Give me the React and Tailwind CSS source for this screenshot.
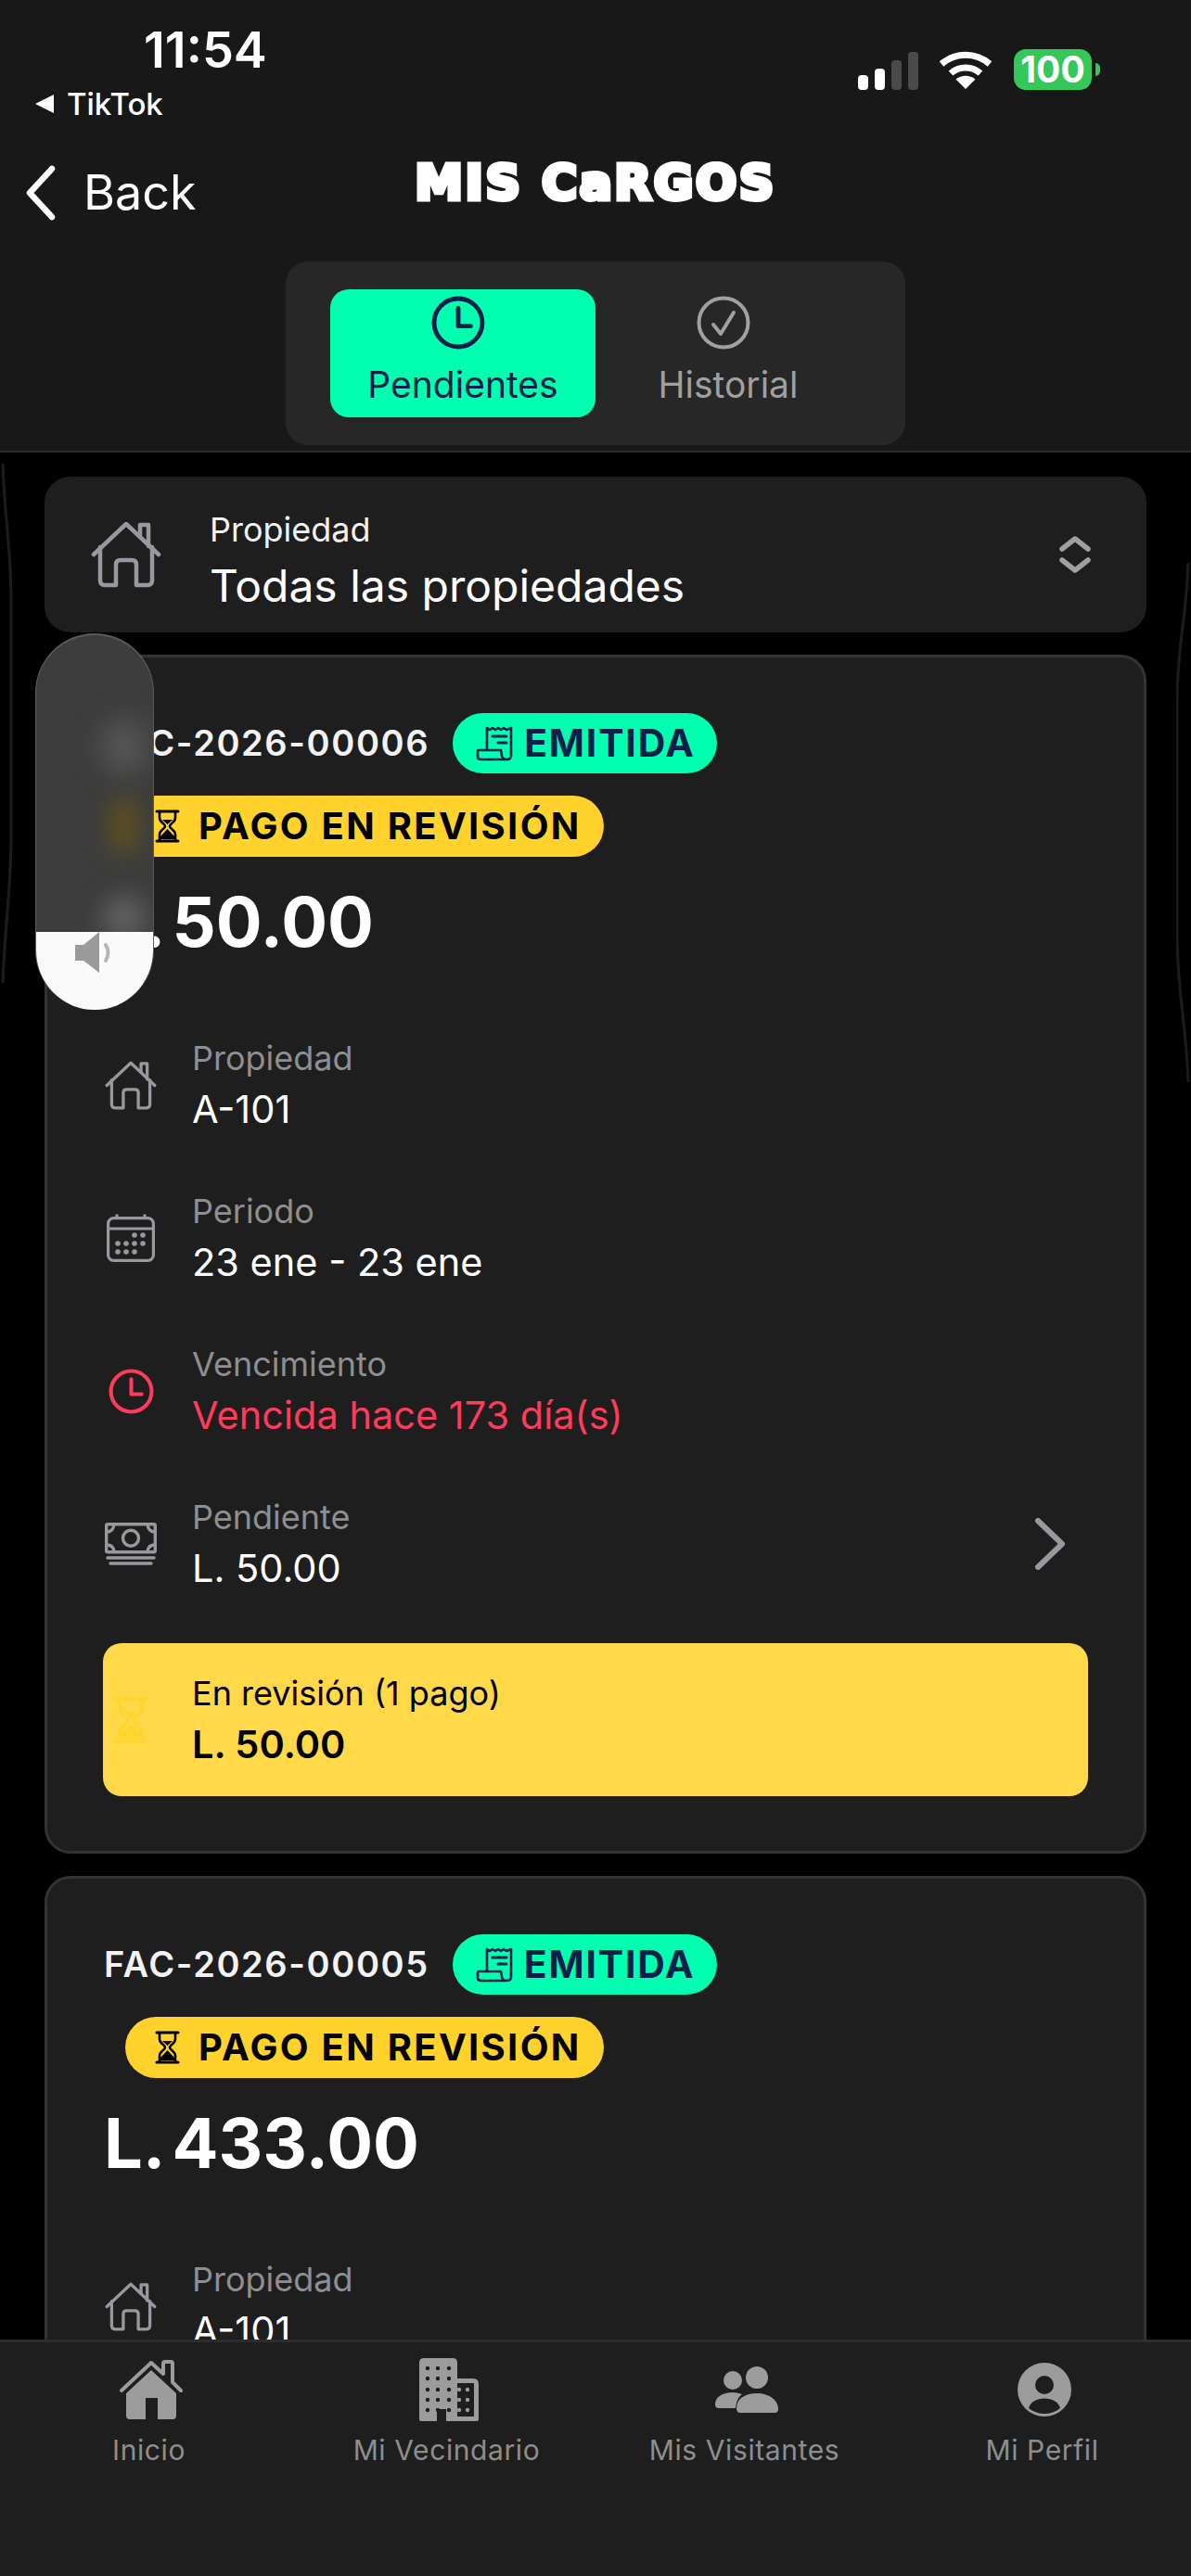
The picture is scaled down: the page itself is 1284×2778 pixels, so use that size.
import React from 'react'

const HouseLine = ({ className }) => (
  <svg viewBox="0 0 76 72" fill="none" stroke="currentColor" strokeWidth="4.5" strokeLinecap="round" strokeLinejoin="round" className={className}>
    <path d="M3 36 L38 3 L73 36" />
    <path d="M53 17 V4 H62 V27" />
    <path d="M10 28 V64 Q10 69 15 69 H27 V47 Q27 42 32 42 H44 Q49 42 49 47 V69 H61 Q66 69 66 64 V28" />
  </svg>
)

const Calendar = ({ className }) => (
  <svg viewBox="0 0 52 52" fill="none" stroke="currentColor" strokeWidth="3.2" className={className}>
    <rect x="1.6" y="4.6" width="48.8" height="45.8" rx="6" />
    <path d="M1.6 16 H50.4" />
    <path d="M11 0.5 V5 M41 0.5 V5" />
    <g fill="currentColor" stroke="none">
      <circle cx="30" cy="23" r="2.8" /><circle cx="39" cy="23" r="2.8" />
      <circle cx="12" cy="32" r="2.8" /><circle cx="21" cy="32" r="2.8" /><circle cx="30" cy="32" r="2.8" /><circle cx="39" cy="32" r="2.8" />
      <circle cx="12" cy="41" r="2.8" /><circle cx="21" cy="41" r="2.8" /><circle cx="30" cy="41" r="2.8" />
    </g>
  </svg>
)

const Clock = ({ className, width = 4 }) => (
  <svg viewBox="0 0 48 48" fill="none" stroke="currentColor" strokeWidth={width} strokeLinecap="round" strokeLinejoin="round" className={className}>
    <circle cx="24" cy="24" r="21.5" />
    <path d="M24 11 V27 H35" />
  </svg>
)

const Check = ({ className }) => (
  <svg viewBox="0 0 58 58" fill="none" stroke="currentColor" strokeWidth="4" strokeLinecap="round" strokeLinejoin="round" className={className}>
    <circle cx="29" cy="29" r="26.5" />
    <path d="M18 31 L26 41 L40 18" />
  </svg>
)

const Cash = ({ className }) => (
  <svg viewBox="0 0 56 46" fill="none" stroke="currentColor" strokeWidth="3.4" strokeLinecap="round" className={className}>
    <rect x="1.7" y="1.7" width="52.6" height="30" rx="1.5" />
    <circle cx="28" cy="16.7" r="8.5" />
    <path d="M2 10 Q9 10 10 2 M54 10 Q47 10 46 2 M2 24 Q9 24 10 31 M54 24 Q47 24 46 31" />
    <path d="M3 38 H53 M6 44 H50" />
  </svg>
)

const Receipt = ({ className }) => (
  <svg viewBox="0 0 40 38" fill="none" stroke="currentColor" strokeWidth="2.6" strokeLinecap="round" strokeLinejoin="round" className={className}>
    <path d="M12 25 V2 L15 4 L18 2 L21 4 L24 2 L27 4 L30 2 L33 4 L38 2 V32 Q38 36 33 36 Q29 36 28 32 L27 26 H3 Q2 26 2 28 V33 Q2 36 6 36 H33" />
    <path d="M18 11 H33 M24 18 H33" strokeWidth="3" />
  </svg>
)

const Hourglass = ({ className }) => (
  <svg viewBox="0 0 27 36" fill="none" stroke="currentColor" strokeWidth="2.6" strokeLinecap="round" strokeLinejoin="round" className={className}>
    <path d="M2 2 H25 M2 34 H25" strokeWidth="3" />
    <path d="M5 3 V9 C5 14 11 15 11 18 C11 21 5 22 5 27 V33 M22 3 V9 C22 14 16 15 16 18 C16 21 22 22 22 27 V33" />
    <path d="M13.5 21 L21 29 V32 H6 V29 Z M8 11 H19 L13.5 16 Z" fill="currentColor" stroke="none" />
  </svg>
)

const HouseFill = ({ className }) => (
  <svg viewBox="0 0 68 64" fill="currentColor" className={className}>
    <path d="M2 33 L34 3 L47 15 V4 Q47 2 49 2 H55 Q57 2 57 4 V24 L66 33" fill="none" stroke="currentColor" strokeWidth="4" strokeLinecap="round" strokeLinejoin="round" />
    <path d="M34 11 L61 36 V60 Q61 64 57 64 H41 V41 H28 V64 H11 Q7 64 7 60 V36 Z" />
  </svg>
)

const Building = ({ className }) => {
  const xs = [9, 20, 32]
  const ys = [11, 22, 34, 45, 56]
  return (
    <svg viewBox="0 0 64 68" className={className}>
      <path fill="currentColor" d="M5 0 H36 Q41 0 41 5 V22 H58 Q64 22 64 28 V66 Q64 68 62 68 H29 V55 H19 V68 H2 Q0 68 0 66 V5 Q0 0 5 0 Z" />
      <rect x="41" y="27" width="18" height="36" fill="#1e1e1e" />
      {ys.map((y) => xs.map((x) => <circle key={`${x}-${y}`} cx={x} cy={y} r="2.2" fill="#1e1e1e" />))}
      {[34, 45, 56].map((y) => [43, 52].map((x) => <circle key={`${x}-${y}`} cx={x} cy={y} r="2.2" fill="currentColor" />))}
    </svg>
  )
}

const People = ({ className }) => (
  <svg viewBox="0 0 68 50" fill="currentColor" className={className}>
    <circle cx="19" cy="15" r="10" />
    <circle cx="45" cy="12" r="12" />
    <path d="M0 41 C0 33 8 28 19 28 C23 28 26 29 29 30 C25 33 23 37 22 45 H4 Q0 45 0 41 Z" />
    <path d="M23 45 C23 35 32 29 45 29 C59 29 68 37 68 46 Q68 50 64 50 H27 Q23 50 23 45 Z" />
  </svg>
)

const Profile = ({ className }) => (
  <svg viewBox="0 0 58 58" className={className}>
    <circle cx="29" cy="29" r="29" fill="currentColor" />
    <circle cx="29" cy="24" r="10" fill="#1e1e1e" />
    <path d="M12 49 C14 42 21 38.500 29 38.500 C37 38.500 44 42 46 49 C41 53 35 55 29 55 C23 55 17 53 12 49 Z" fill="#1e1e1e" />
  </svg>
)

const Row = ({ icon, label, value, valueClass = 'text-white', right }) => (
  <div className="flex items-center">
    <div className="w-[60px] flex justify-center text-[#98989f] shrink-0">{icon}</div>
    <div className="ml-[36px] flex-1">
      <div className="text-[36px] leading-[44px] text-[#8e8e93]">{label}</div>
      <div className={`mt-[8px] text-[41.5px] leading-[50px] font-normal ${valueClass}`}>{value}</div>
    </div>
    {right}
  </div>
)

const Card = ({ code, amount, pending }) => (
  <div className="border-[3px] border-[#333333] rounded-[28px] bg-[#1e1e1e] px-[60px] pt-[60px] pb-[59px] shrink-0">
    <div className="flex items-center h-[65px]">
      <span className="ml-[1px] text-[38px] font-semibold tracking-[1.6px] text-[#f2f2f2]">{code}</span>
      <span className="ml-[25px] h-[65px] w-[285px] rounded-full bg-[#00ffae] text-[#0f1f4b] flex items-center pl-[25px]">
        <Receipt className="w-[40px] h-[38px]" />
        <span className="ml-[12px] text-[41px] font-bold tracking-[1.8px]">EMITIDA</span>
      </span>
    </div>
    <div className="mt-[24px] ml-[24px] w-[516px] h-[66px] rounded-full bg-[#ffd22e] text-black flex items-center pl-[32px]">
      <Hourglass className="w-[27px] h-[36px]" />
      <span className="ml-[20px] text-[40px] font-bold tracking-[2.3px]">PAGO EN REVISIÓN</span>
    </div>
    <div className="mt-[25px] ml-[1px] text-[74px] leading-[90px] font-bold text-white flex">
      <span>L.</span><span className="ml-[7px]">{amount}</span>
    </div>
    <div className="mt-[80px] flex flex-col gap-[63px]">
      <Row icon={<HouseLine className="w-[56px] h-[53px]" />} label="Propiedad" value="A-101" />
      <Row icon={<Calendar className="w-[52px] h-[52px]" />} label="Periodo" value="23 ene - 23 ene" />
      <Row icon={<Clock className="w-[49px] h-[49px] text-[#ff3b5c]" />} label="Vencimiento" value="Vencida hace 173 día(s)" valueClass="text-[#ff3b5c]" />
      <Row
        icon={<Cash className="w-[56px] h-[46px]" />}
        label="Pendiente"
        value={`L. ${amount}`}
        right={
          <svg viewBox="0 0 34 56" fill="none" stroke="#98989f" strokeWidth="6" strokeLinecap="round" strokeLinejoin="round" className="w-[34px] h-[56px] mr-[24px]">
            <path d="M4 3 L30 28 L4 53" />
          </svg>
        }
      />
    </div>
    <div className="mt-[56px] h-[165px] rounded-[20px] bg-[#ffd949] flex items-center">
      <div className="w-[60px] flex justify-center shrink-0 text-[#ffd52e]">
        <Hourglass className="w-[38px] h-[52px]" />
      </div>
      <div className="ml-[36px]">
        <div className="text-[36px] leading-[44px] text-black">En revisión (1 pago)</div>
        <div className="mt-[8px] text-[41.5px] leading-[50px] font-semibold text-black">L. {pending}</div>
      </div>
    </div>
  </div>
)

export default function App() {
  return (
    <div className="relative w-full h-[2778px] overflow-hidden flex flex-col bg-black font-['Inter',sans-serif]">
      {/* header */}
      <header className="h-[488px] shrink-0 bg-[#181818] border-b-[2px] border-[#2a2a2a]">
        <div className="h-[150px] flex justify-between">
          <div className="pl-[38px] pt-[23px]">
            <div className="ml-[117px] text-[54px] leading-[62px] font-semibold text-white">11:54</div>
            <div className="mt-[7px] flex items-center text-[33px] leading-[40px] font-medium text-white">
              <svg viewBox="0 0 20 20" className="w-[20px] h-[20px]" fill="white"><path d="M0 10 L20 0 V20 Z" /></svg>
              <span className="ml-[14px]">TikTok</span>
            </div>
          </div>
          <div className="pr-[98px] pt-[53px] flex items-start">
            <div className="flex items-end gap-[7px] h-[44px]">
              <div className="w-[11px] h-[16px] rounded-[4px] bg-white" />
              <div className="w-[11px] h-[23px] rounded-[4px] bg-white" />
              <div className="w-[11px] h-[32px] rounded-[4px] bg-[#4a4a4a]" />
              <div className="w-[11px] h-[41px] rounded-[4px] bg-[#4a4a4a]" />
            </div>
            <svg viewBox="0 0 58 42" className="ml-[22px] w-[58px] h-[42px] mt-[2px]" fill="none" stroke="white" strokeWidth="7">
              <path d="M3 14 C18 1 40 1 55 14" />
              <path d="M13 24 C22 16 36 16 45 24" />
              <path d="M18.500 30.500 L29 41 L39.500 30.500 C33 25.500 25 25.500 18.500 30.500 Z" fill="white" stroke="none" />
            </svg>
            <div className="ml-[23px] w-[84px] h-[44px] rounded-[13px] bg-[#34c759] flex items-center justify-center text-[39px] font-bold text-white">100</div>
            <div className="ml-[4px] mt-[15px] w-[5px] h-[14px] rounded-r-full bg-[#34c759]" />
          </div>
        </div>
        <div className="h-[132px] grid grid-cols-[1fr_auto_1fr] items-center">
          <div className="flex items-center pl-[28px] pb-[16px]">
            <svg viewBox="0 0 32 60" fill="none" stroke="white" strokeWidth="6.500" strokeLinecap="round" strokeLinejoin="round" className="w-[32px] h-[60px]">
              <path d="M28 4 L4 30 L28 56" />
            </svg>
            <span className="ml-[30px] text-[52px] text-white">Back</span>
          </div>
          <div className="pb-[38px] font-['DejaVu_Sans',sans-serif] font-bold text-[52px] leading-[50px] tracking-[2.5px] text-white [-webkit-text-stroke:5px_white]">MIS CaRGOS</div>
          <div />
        </div>
        <div className="mx-auto w-[668px] h-[198px] rounded-[24px] bg-[#272727] pl-[48px] pt-[30px] flex">
          <div className="w-[286px] h-[138px] rounded-[20px] bg-[#00ffae] text-[#0f1f4b] flex flex-col items-center pt-[7px]">
            <Clock className="w-[58px] h-[58px] mr-[11px]" />
            <span className="mt-[14px] text-[39px] leading-[48px]">Pendientes</span>
          </div>
          <div className="w-[286px] h-[138px] text-[#a0a0a0] flex flex-col items-center pt-[7px]">
            <Check className="w-[58px] h-[58px] mr-[11px]" />
            <span className="mt-[14px] text-[39px] leading-[48px]">Historial</span>
          </div>
        </div>
      </header>

      {/* contenido */}
      <main className="flex-1 min-h-0 overflow-hidden px-[48px] pt-[26px] flex flex-col gap-[24px]">
        <div className="h-[168px] shrink-0 rounded-[28px] bg-[#1e1e1e] flex items-center pl-[50px] pr-[60px]">
          <HouseLine className="w-[76px] h-[72px] text-[#98989f]" />
          <div className="ml-[52px] flex-1 pt-[14px]">
            <div className="text-[36px] leading-[44px] text-[#f2f2f2]">Propiedad</div>
            <div className="mt-[10px] text-[48px] leading-[58px] text-white">Todas las propiedades</div>
          </div>
          <svg viewBox="0 0 34 40" fill="none" stroke="#a0a0a0" strokeWidth="5.500" strokeLinecap="round" strokeLinejoin="round" className="w-[34px] h-[40px]">
            <path d="M3 14 L17 3 L31 14" />
            <path d="M3 26 L17 37 L31 26" />
          </svg>
        </div>
        <Card code="FAC-2026-00006" amount="50.00" pending="50.00" />
        <Card code="FAC-2026-00005" amount="433.00" pending="433.00" />
      </main>

      {/* nav inferior */}
      <nav className="h-[255px] shrink-0 bg-[#1e1e1e] border-t-[3px] border-[#2e2e2e] grid grid-cols-4 pt-[15px] items-start text-[#8e8e8e]">
        {[
          { label: 'Inicio', icon: <HouseFill className="w-[68px] h-[64px]" /> },
          { label: 'Mi Vecindario', icon: <Building className="w-[64px] h-[68px]" /> },
          { label: 'Mis Visitantes', icon: <People className="w-[68px] h-[50px]" /> },
          { label: 'Mi Perfil', icon: <Profile className="w-[58px] h-[58px]" /> },
        ].map((item) => (
          <div key={item.label} className="flex flex-col items-center">
            <div className="h-[72px] flex items-center justify-center pl-[4px] text-[#9c9c9c]">{item.icon}</div>
            <span className="mt-[11px] text-[30px] leading-[36px] tracking-[0.6px]">{item.label}</span>
          </div>
        ))}
      </nav>

      {/* lineas tenues del fondo */}
      <svg viewBox="0 0 16 560" fill="none" stroke="#1c1c1c" strokeWidth="3" className="absolute right-0 top-[607px] w-[16px] h-[560px]">
        <path d="M13 0 C11 60 1 90 1 150 V400 C1 460 11 500 13 560" />
      </svg>
      <svg viewBox="0 0 16 560" fill="none" stroke="#1c1c1c" strokeWidth="3" className="absolute left-0 top-[500px] w-[16px] h-[560px]">
        <path d="M3 0 C5 60 12 90 12 150 V400 C12 460 5 500 3 560" />
      </svg>

      {/* volumen del sistema, encima de todo */}
      <div className="absolute left-[38px] top-[683px] w-[128px] h-[406px] rounded-[64px] overflow-hidden bg-[#3d3d3d] border-t-[2px] border-x-[1px] border-[#5a5a5a] flex flex-col justify-end">
        <div className="absolute left-[70px] top-[90px] w-[50px] h-[60px] rounded-full bg-[#555555] blur-[14px]" />
        <div className="absolute left-[80px] top-[175px] w-[30px] h-[60px] rounded-full bg-[#5e5020] blur-[12px]" />
        <div className="absolute left-[70px] top-[280px] w-[50px] h-[50px] rounded-full bg-[#5e5e5e] blur-[12px]" />
        <div className="relative h-[84px] bg-[#fafafa] flex justify-center">
          <svg viewBox="0 0 44 44" className="w-[44px] h-[44px]" fill="#9a9a9a">
            <path d="M1 14 H10 L27 0 V44 L10 31 H1 Z" />
            <path d="M34 14 Q39 22 34 31" fill="none" stroke="#b5b5b5" strokeWidth="4" strokeLinecap="round" />
          </svg>
        </div>
      </div>
    </div>
  )
}
